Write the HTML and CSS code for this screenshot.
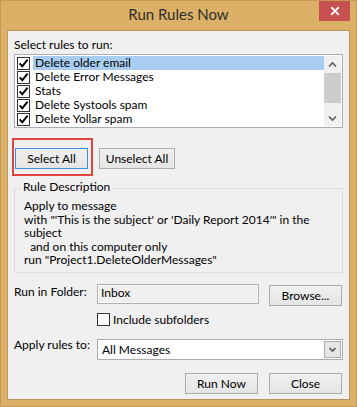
FILE: index.html
```html
<!DOCTYPE html>
<html>
<head>
<meta charset="utf-8">
<link rel="stylesheet" href="styles.css">
</head>
<body>
<div class="window">
  <div class="titlebar">
    <div class="title">Run Rules Now</div>
    <div class="close">
      <svg width="10" height="10" viewBox="0 0 10 10"><path d="M1.2 1.2 L8.8 8.8 M8.8 1.2 L1.2 8.8" stroke="#fff" stroke-width="1.9" fill="none"/></svg>
    </div>
  </div>
  <div class="client">
    <div class="top-label">Select rules to run:</div>
    <div class="listbox">
      <div class="rows">
        <div class="row"><span class="cb"><svg width="11" height="11" viewBox="0 0 11 11"><path d="M1.6 5.4 L4.3 8.2 L9.6 1.6" stroke="#000" stroke-width="1.9" fill="none"/></svg></span><span class="rtext selected">Delete older email</span></div>
        <div class="row"><span class="cb"><svg width="11" height="11" viewBox="0 0 11 11"><path d="M1.6 5.4 L4.3 8.2 L9.6 1.6" stroke="#000" stroke-width="1.9" fill="none"/></svg></span><span class="rtext">Delete Error Messages</span></div>
        <div class="row"><span class="cb"><svg width="11" height="11" viewBox="0 0 11 11"><path d="M1.6 5.4 L4.3 8.2 L9.6 1.6" stroke="#000" stroke-width="1.9" fill="none"/></svg></span><span class="rtext">Stats</span></div>
        <div class="row"><span class="cb"><svg width="11" height="11" viewBox="0 0 11 11"><path d="M1.6 5.4 L4.3 8.2 L9.6 1.6" stroke="#000" stroke-width="1.9" fill="none"/></svg></span><span class="rtext">Delete Systools spam</span></div>
        <div class="row"><span class="cb"><svg width="11" height="11" viewBox="0 0 11 11"><path d="M1.6 5.4 L4.3 8.2 L9.6 1.6" stroke="#000" stroke-width="1.9" fill="none"/></svg></span><span class="rtext">Delete Yollar spam</span></div>
      </div>
      <div class="scrollbar">
        <div class="sb-btn"><svg width="17" height="17" viewBox="0 0 17 17"><polyline points="5,10.5 8.5,7 12,10.5" stroke="#606060" stroke-width="1.7" fill="none"/></svg></div>
        <div class="thumb"></div>
        <div class="sb-btn sb-down"><svg width="17" height="17" viewBox="0 0 17 17"><polyline points="5,7.5 8.5,11 12,7.5" stroke="#606060" stroke-width="1.7" fill="none"/></svg></div>
      </div>
    </div>
    <div class="btnrow">
      <button class="btn default">Select All</button>
      <button class="btn wide">Unselect All</button>
      <div class="annot"></div>
    </div>
    <div class="group">
      <div class="legend">Rule Description</div>
      <div class="desc">Apply to message
with "'This is the subject' or 'Daily Report 2014'" in the
subject
  and on this computer only
run "Project1.DeleteOlderMessages"</div>
    </div>
    <div class="form">
      <div class="flabel">Run in Folder:</div>
      <div class="field-row">
        <div class="textbox">Inbox</div>
        <button class="btn browse">Browse...</button>
      </div>
      <div class="check-row">
        <span class="cb2"></span><span>Include subfolders</span>
      </div>
      <div class="flabel apply">Apply rules to:</div>
      <div class="combo">
        <span class="combo-text">All Messages</span>
        <span class="dd"><svg width="15" height="15" viewBox="0 0 15 15"><polyline points="4.5,6 7.5,9 10.5,6" stroke="#555" stroke-width="1.6" fill="none"/></svg></span>
      </div>
    </div>
    <div class="bottom">
      <button class="btn">Run Now</button>
      <button class="btn">Close</button>
    </div>
  </div>
</div>
</body>
</html>
```

FILE: styles.css
```css
* { box-sizing: border-box; }
html, body { margin: 0; padding: 0; }
body {
  width: 357px;
  height: 407px;
  overflow: hidden;
  font-family: "Lato", "Noto Sans", sans-serif;
  font-size: 12px;
  color: #000;
}
.window {
  width: 357px;
  height: 407px;
  background: #dcb067;
  border: 1px solid #c49a55;
  display: flex;
  flex-direction: column;
}
.titlebar {
  height: 29px;
  flex: none;
  display: grid;
  grid-template-columns: 1fr auto 1fr;
  align-items: start;
}
.title {
  grid-column: 2;
  font-size: 15px;
  line-height: 20px;
  padding-top: 3px;
  color: #2e2e2e;
}
.close {
  grid-column: 3;
  justify-self: end;
  width: 31px;
  height: 20px;
  margin-right: 6px;
  background: #c75050;
  display: flex;
  align-items: center;
  justify-content: center;
}
.client {
  margin: 0 6px;
  height: 370px;
  flex: none;
  border: 1px solid #b8965d;
  background: #f0f0f0;
  padding: 0 6px;
}
.top-label {
  padding-top: 6px;
  line-height: 15px;
}
.listbox {
  margin-top: 2px;
  height: 74px;
  border: 1px solid #abadb3;
  background: #fff;
  padding: 1px;
  display: flex;
}
.rows { flex: 1; }
.row {
  height: 14px;
  display: flex;
  align-items: center;
  padding-left: 1px;
}
.cb {
  width: 13px;
  height: 13px;
  border: 1px solid #333;
  background: #fff;
  margin-right: 3px;
  flex: none;
  display: flex;
}
.rtext {
  flex: 1;
  height: 14px;
  line-height: 14px;
  padding-left: 2px;
  white-space: nowrap;
  overflow: hidden;
}
.rtext.selected { background: #a8cdf0; }
.scrollbar {
  width: 17px;
  background: #f0f0f0;
  display: flex;
  flex-direction: column;
}
.sb-btn { height: 17px; display: flex; }
.thumb { height: 30px; background: #cdcdcd; }
.sb-down { margin-top: auto; }
.btnrow {
  margin-top: 20px;
  height: 21px;
  display: flex;
  position: relative;
}
.btn {
  width: 73px;
  height: 21px;
  border: 1px solid #acacac;
  background: linear-gradient(#f0f0f0, #e5e5e5);
  font-family: inherit;
  font-size: 12px;
  color: #000;
  padding: 0;
  line-height: 17px;
  margin: 0;
}
.btnrow .btn.default { margin-left: 1px; border-color: #3c8fe0; }
.btnrow .btn.wide { margin-left: 11px; width: 76px; }
.annot {
  position: absolute;
  left: -2px;
  top: -10px;
  width: 81px;
  height: 38px;
  border: 2px solid #e2453f;
}
.group {
  margin-top: 19px;
  height: 85px;
  border: 1px solid #dcdcdc;
  position: relative;
  padding: 10px 0 0 9px;
}
.legend {
  position: absolute;
  top: -10px;
  left: 6px;
  padding: 0 2px;
  line-height: 15px;
  background: #f0f0f0;
}
.desc {
  white-space: pre;
  line-height: 13.5px;
}
.form {
  margin-top: 11px;
  display: grid;
  grid-template-columns: 83px 1fr;
}
.flabel { line-height: 15px; }
.field-row { display: flex; align-items: flex-start; }
.textbox {
  width: 162px;
  height: 20px;
  border: 1px solid #b0b0b0;
  box-shadow: inset 0 0 0 1px #fafafa;
  padding: 0 3px;
  line-height: 16px;
}
.browse { margin-top: 1px; margin-left: auto; margin-right: 1px; }
.check-row {
  grid-column: 2;
  margin-top: 6px;
  display: flex;
  align-items: center;
  gap: 3px;
  line-height: 15px;
}
.cb2 {
  width: 13px;
  height: 13px;
  border: 1px solid #333;
  background: #fff;
}
.apply { margin-top: 10px; }
.combo {
  margin-top: 12px;
  height: 21px;
  border: 1px solid #acacac;
  background: #fff;
  padding: 1px;
  display: flex;
  align-items: center;
}
.combo-text { flex: 1; padding-left: 3px; line-height: 15px; }
.dd {
  width: 17px;
  height: 17px;
  border: 1px solid #acacac;
  background: #e6e6e6;
  display: flex;
  align-items: center;
  justify-content: center;
}
.bottom {
  margin-top: 13px;
  display: flex;
  justify-content: flex-end;
  gap: 11px;
  padding-right: 1px;
}
```
